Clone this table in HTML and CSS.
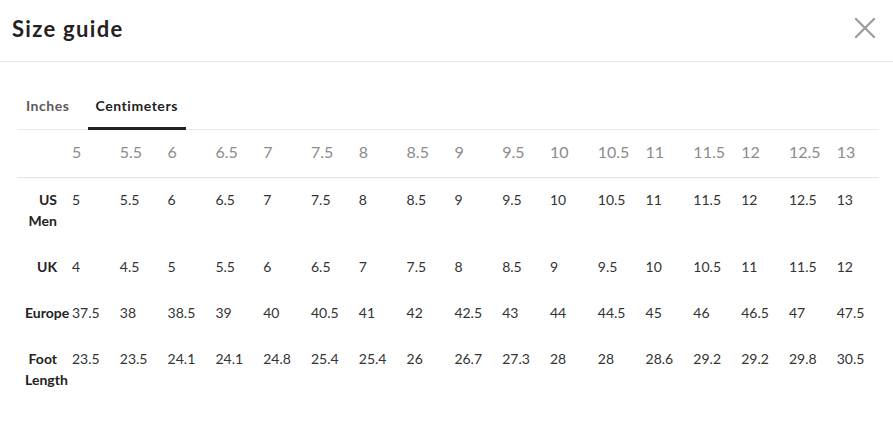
FILE: index.html
```html
<!DOCTYPE html>
<html>
<head>
<meta charset="utf-8">
<link rel="stylesheet" href="styles.css">
</head>
<body>
<div class="modal">
  <header class="modal-head">
    <h1 class="title">Size guide</h1>
    <button class="close" aria-label="Close">
      <svg width="20" height="20" viewBox="0 0 20 20"><path d="M1 1 L19 19 M19 1 L1 19" stroke="#9a9a9a" stroke-width="2.2" fill="none" stroke-linecap="round"/></svg>
    </button>
  </header>
  <div class="content">
    <nav class="tabs">
      <span class="tab">Inches</span>
      <span class="tab active">Centimeters</span>
    </nav>
    <table class="sizes">
      <colgroup>
        <col class="c-label">
        <col class="c-val"><col class="c-val"><col class="c-val"><col class="c-val"><col class="c-val"><col class="c-val"><col class="c-val"><col class="c-val"><col class="c-val"><col class="c-val"><col class="c-val"><col class="c-val"><col class="c-val"><col class="c-val"><col class="c-val"><col class="c-val">
        <col>
      </colgroup>
      <thead>
        <tr>
          <th class="lbl"></th>
          <th>5</th><th>5.5</th><th>6</th><th>6.5</th><th>7</th><th>7.5</th><th>8</th><th>8.5</th><th>9</th><th>9.5</th><th>10</th><th>10.5</th><th>11</th><th>11.5</th><th>12</th><th>12.5</th><th>13</th>
        </tr>
      </thead>
      <tbody>
        <tr>
          <th class="lbl">US Men</th>
          <td>5</td><td>5.5</td><td>6</td><td>6.5</td><td>7</td><td>7.5</td><td>8</td><td>8.5</td><td>9</td><td>9.5</td><td>10</td><td>10.5</td><td>11</td><td>11.5</td><td>12</td><td>12.5</td><td>13</td>
        </tr>
        <tr>
          <th class="lbl">UK</th>
          <td>4</td><td>4.5</td><td>5</td><td>5.5</td><td>6</td><td>6.5</td><td>7</td><td>7.5</td><td>8</td><td>8.5</td><td>9</td><td>9.5</td><td>10</td><td>10.5</td><td>11</td><td>11.5</td><td>12</td>
        </tr>
        <tr>
          <th class="lbl">Europe</th>
          <td>37.5</td><td>38</td><td>38.5</td><td>39</td><td>40</td><td>40.5</td><td>41</td><td>42</td><td>42.5</td><td>43</td><td>44</td><td>44.5</td><td>45</td><td>46</td><td>46.5</td><td>47</td><td>47.5</td>
        </tr>
        <tr>
          <th class="lbl">Foot Length</th>
          <td>23.5</td><td>23.5</td><td>24.1</td><td>24.1</td><td>24.8</td><td>25.4</td><td>25.4</td><td>26</td><td>26.7</td><td>27.3</td><td>28</td><td>28</td><td>28.6</td><td>29.2</td><td>29.2</td><td>29.8</td><td>30.5</td>
        </tr>
      </tbody>
    </table>
  </div>
</div>
</body>
</html>
```
FILE: styles.css
```css
* { box-sizing: border-box; }
html, body { margin: 0; padding: 0; background: #fff; }
body {
  font-family: "Lato", "Liberation Sans", sans-serif;
  color: #222;
  width: 893px;
  height: 440px;
  overflow: hidden;
}
.modal-head {
  height: 62px;
  border-bottom: 1px solid #e8e8e8;
  display: flex;
  align-items: center;
  justify-content: space-between;
  padding: 0 16px 0 12px;
}
.title {
  margin: 0;
  font-size: 22px;
  font-weight: 700;
  color: #222;
  letter-spacing: 1.3px;
  margin-top: -4px;
}
.close {
  border: 0;
  background: none;
  padding: 0;
  width: 24px;
  height: 24px;
  display: flex;
  align-items: center;
  justify-content: center;
  margin-top: -5px;
}
.content {
  padding: 0 14px 0 17px;
}
.tabs {
  margin-top: 26px;
  display: flex;
  gap: 10px;
  border-bottom: 1px solid #e8e8e8;
}
.tab {
  font-size: 14px;
  letter-spacing: 0.55px;
  line-height: 16px;
  font-weight: 700;
  color: #5a5a5a;
  padding: 10px 8px 13px;
  border-bottom: 3px solid transparent;
  margin-bottom: -1px;
}
.tab:first-child { margin-left: 1px; }
.tab.active {
  color: #222;
  border-bottom-color: #222;
}
.sizes {
  width: 862px;
  table-layout: fixed;
  border-collapse: collapse;
}
.c-label { width: 55px; }
.c-val { width: 47.8px; }
.sizes th, .sizes td {
  padding: 0;
  text-align: left;
  vertical-align: top;
}
.sizes thead tr { border-bottom: 1px solid #e3e3e3; }
.sizes thead th {
  font-size: 16px;
  font-weight: 400;
  color: #8c8c8c;
  line-height: 22px;
  padding: 11px 0 14px;
}
.sizes tbody td {
  font-size: 14px;
  line-height: 21px;
  color: #333;
  padding: 11px 0 14px;
}
.sizes th.lbl {
  font-size: 14px;
  line-height: 21px;
  font-weight: 700;
  color: #222;
  text-align: right;
  padding: 11px 15px 14px 8px;
}
```
